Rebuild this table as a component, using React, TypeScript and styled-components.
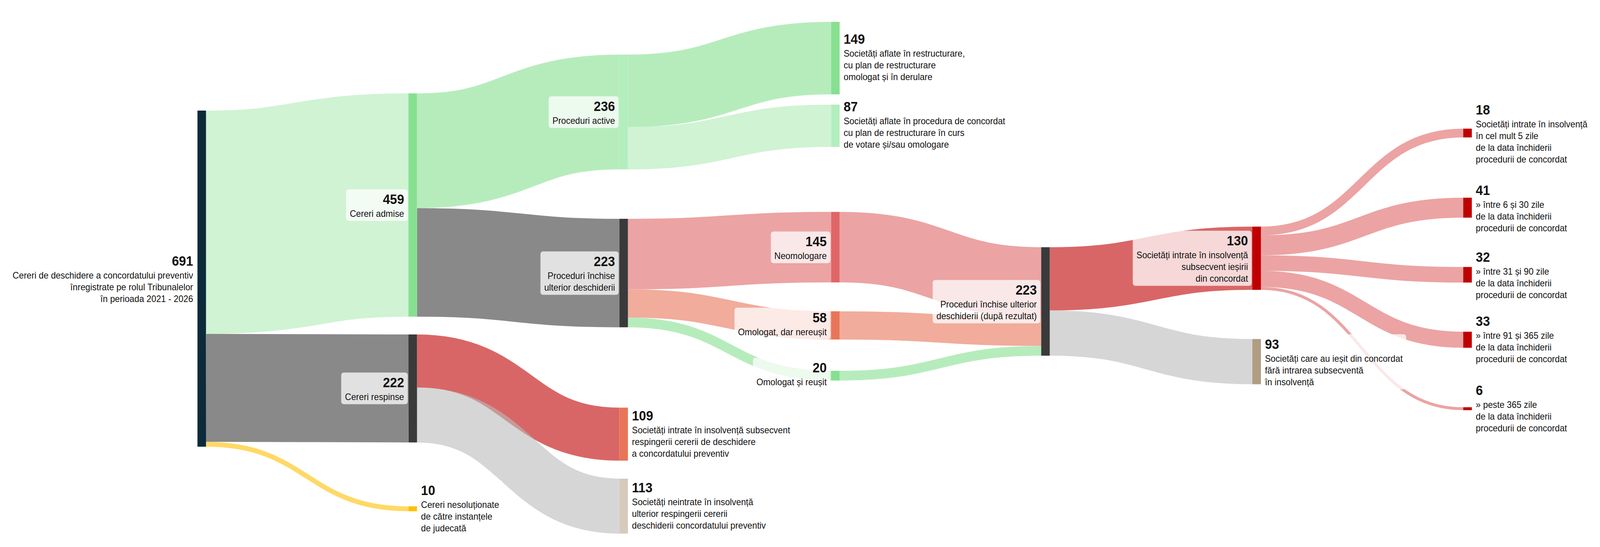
import React, { useEffect, useState } from 'react';
import styled, { createGlobalStyle } from 'styled-components';

const GlobalStyle = createGlobalStyle`
  html, body {
    margin: 0;
    padding: 0;
    background: #ffffff;
  }
  body {
    font-family: "Liberation Sans", Arial, Helvetica, sans-serif;
    color: #111111;
  }
`;

/* Design space of the chart: 4400 x 1400 */
const DESIGN_W = 4400;
const DESIGN_H = 1400;
const K = 1.245;
const NW = 23.5;
const COLS = [543, 1123.3, 1703.3, 2285.5, 2863.3, 3444, 4024];

type Side = 'left' | 'right';

interface NodeDef {
  id: string;
  col: number;
  top: number;
  value: number;
  color: string;
  side: Side;
  lines: string[];
  dy?: number;
}

interface LinkDef {
  s: string;
  t: string;
  value: number;
  color: string;
  opacity: number;
}

const DAYS = ['de la data închiderii', 'procedurii de concordat'];

const NODES: NodeDef[] = [
  {
    id: 'n0', col: 0, top: 283, value: 691, color: '#0b2a3a', side: 'left',
    lines: ['Cereri de deschidere a concordatului preventiv', 'înregistrate pe rolul Tribunalelor', 'în perioada 2021 - 2026'],
  },
  { id: 'n1', col: 1, top: 239, value: 459, color: '#86e090', side: 'left', lines: ['Cereri admise'] },
  { id: 'n2', col: 1, top: 856, value: 222, color: '#3a3a3a', side: 'left', lines: ['Cereri respinse'] },
  {
    id: 'n3', col: 1, top: 1296, value: 10, color: '#ffc000', side: 'right', dy: -2,
    lines: ['Cereri nesoluționate', 'de către instanțele', 'de judecată'],
  },
  { id: 'n4', col: 2, top: 139.7, value: 236, color: '#b3eebe', side: 'left', lines: ['Proceduri active'] },
  { id: 'n5', col: 2, top: 560, value: 223, color: '#3a3a3a', side: 'left', lines: ['Proceduri închise', 'ulterior deschiderii'] },
  {
    id: 'n6', col: 2, top: 1043.3, value: 109, color: '#e87558', side: 'right', dy: -2,
    lines: ['Societăți intrate în insolvență subsecvent', 'respingerii cererii de deschidere', 'a concordatului preventiv'],
  },
  {
    id: 'n7', col: 2, top: 1225, value: 113, color: '#d6cabd', side: 'right', dy: -2,
    lines: ['Societăți neintrate în insolvență', 'ulterior respingerii cererii', 'deschiderii concordatului preventiv'],
  },
  {
    id: 'n8', col: 3, top: 56, value: 149, color: '#86e090', side: 'right', dy: -4,
    lines: ['Societăți aflate în restructurare,', 'cu plan de restructurare', 'omologat și în derulare'],
  },
  {
    id: 'n9', col: 3, top: 267.7, value: 87, color: '#b3eebe', side: 'right', dy: -4,
    lines: ['Societăți aflate în procedura de concordat', 'cu plan de restructurare în curs', 'de votare și/sau omologare'],
  },
  { id: 'n10', col: 3, top: 542.3, value: 145, color: '#e06666', side: 'left', lines: ['Neomologare'] },
  { id: 'n11', col: 3, top: 796.7, value: 58, color: '#e87558', side: 'left', lines: ['Omologat, dar nereușit'], dy: -5 },
  { id: 'n12', col: 3, top: 949, value: 20, color: '#86e090', side: 'left', lines: ['Omologat și reușit'], dy: -5 },
  {
    id: 'n13', col: 4, top: 632.7, value: 223, color: '#3a3a3a', side: 'left',
    lines: ['Proceduri închise ulterior', 'deschiderii (după rezultat)'],
  },
  {
    id: 'n14', col: 5, top: 580, value: 130, color: '#c00000', side: 'left',
    lines: ['Societăți intrate în insolvență', 'subsecvent ieșirii', 'din concordat'],
  },
  {
    id: 'n15', col: 5, top: 867.7, value: 93, color: '#b09d82', side: 'right',
    lines: ['Societăți care au ieșit din concordat', 'fără intrarea subsecventă', 'în insolvență'],
  },
  {
    id: 'n16', col: 6, top: 329.3, value: 18, color: '#c00000', side: 'right',
    lines: ['Societăți intrate în insolvență', 'în cel mult 5 zile', ...DAYS],
  },
  { id: 'n17', col: 6, top: 506, value: 41, color: '#c00000', side: 'right', lines: ['» între 6 și 30 zile', ...DAYS] },
  { id: 'n18', col: 6, top: 683.3, value: 32, color: '#c00000', side: 'right', lines: ['» între 31 și 90 zile', ...DAYS] },
  { id: 'n19', col: 6, top: 849, value: 33, color: '#c00000', side: 'right', lines: ['» între 91 și 365 zile', ...DAYS], dy: -3 },
  { id: 'n20', col: 6, top: 1042.3, value: 6, color: '#c00000', side: 'right', lines: ['» peste 365 zile', ...DAYS], dy: -2 },
];

const GREEN = '#86e090';
const DARK = '#3a3a3a';
const RED = '#c00000';
const PINK = '#e06666';
const SALMON = '#e87558';
const LGREY = '#bbbbbb';

const LINKS: LinkDef[] = [
  { s: 'n0', t: 'n1', value: 459, color: GREEN, opacity: 0.4 },
  { s: 'n0', t: 'n2', value: 222, color: DARK, opacity: 0.6 },
  { s: 'n0', t: 'n3', value: 10, color: '#ffc000', opacity: 0.6 },
  { s: 'n1', t: 'n4', value: 236, color: GREEN, opacity: 0.6 },
  { s: 'n1', t: 'n5', value: 223, color: DARK, opacity: 0.6 },
  { s: 'n2', t: 'n6', value: 109, color: RED, opacity: 0.6 },
  { s: 'n2', t: 'n7', value: 113, color: LGREY, opacity: 0.6 },
  { s: 'n4', t: 'n8', value: 149, color: GREEN, opacity: 0.6 },
  { s: 'n4', t: 'n9', value: 87, color: GREEN, opacity: 0.4 },
  { s: 'n5', t: 'n10', value: 145, color: PINK, opacity: 0.6 },
  { s: 'n5', t: 'n11', value: 58, color: SALMON, opacity: 0.6 },
  { s: 'n5', t: 'n12', value: 20, color: GREEN, opacity: 0.6 },
  { s: 'n10', t: 'n13', value: 145, color: PINK, opacity: 0.6 },
  { s: 'n11', t: 'n13', value: 58, color: SALMON, opacity: 0.6 },
  { s: 'n12', t: 'n13', value: 20, color: GREEN, opacity: 0.6 },
  { s: 'n13', t: 'n14', value: 130, color: RED, opacity: 0.6 },
  { s: 'n13', t: 'n15', value: 93, color: LGREY, opacity: 0.6 },
  { s: 'n14', t: 'n16', value: 18, color: PINK, opacity: 0.6 },
  { s: 'n14', t: 'n17', value: 41, color: PINK, opacity: 0.6 },
  { s: 'n14', t: 'n18', value: 32, color: PINK, opacity: 0.6 },
  { s: 'n14', t: 'n19', value: 33, color: PINK, opacity: 0.6 },
  { s: 'n14', t: 'n20', value: 6, color: PINK, opacity: 0.6 },
];

interface LinkGeom extends LinkDef {
  d: string;
  width: number;
}

const buildLinks = (): LinkGeom[] => {
  const byId = new Map(NODES.map((n) => [n.id, n]));
  const outOff = new Map<string, number>();
  const inOff = new Map<string, number>();
  return LINKS.map((l) => {
    const s = byId.get(l.s)!;
    const t = byId.get(l.t)!;
    const w = l.value * K;
    const so = outOff.get(s.id) ?? 0;
    const to = inOff.get(t.id) ?? 0;
    outOff.set(s.id, so + w);
    inOff.set(t.id, to + w);
    const x0 = COLS[s.col] + NW;
    const x1 = COLS[t.col];
    const y0 = s.top + so + w / 2;
    const y1 = t.top + to + w / 2;
    const xm = (x0 + x1) / 2;
    return {
      ...l,
      width: w,
      d: `M${x0},${y0}C${xm},${y0} ${xm},${y1} ${x1},${y1}`,
    };
  });
};

/* The browser window is narrower than the 4400px design, so the chart is
   fitted to the available width (computed at run time). */
const useFitScale = () => {
  const get = () => (typeof window === 'undefined' ? 1 : Math.min(1, window.innerWidth / DESIGN_W));
  const [scale, setScale] = useState(get);
  useEffect(() => {
    const onResize = () => setScale(get());
    window.addEventListener('resize', onResize);
    return () => window.removeEventListener('resize', onResize);
  }, []);
  return scale;
};

const Viewport = styled.div`
  width: 100%;
  height: ${DESIGN_H}px;
  overflow: hidden;
  background: #ffffff;
`;

const Stage = styled.div`
  position: relative;
  width: ${DESIGN_W}px;
  height: ${DESIGN_H}px;
  transform-origin: 0 0;
`;

const Chart = styled.svg`
  display: block;
  width: ${DESIGN_W}px;
  height: ${DESIGN_H}px;
`;

const LabelLayer = styled.div`
  position: absolute;
  inset: 0;
  pointer-events: none;
`;

const LabelBox = styled.div<{ $side: Side }>`
  position: absolute;
  display: flex;
  flex-direction: column;
  align-items: ${(p) => (p.$side === 'left' ? 'flex-end' : 'flex-start')};
  text-align: ${(p) => (p.$side === 'left' ? 'right' : 'left')};
  padding: 5px 10px 4px;
  border-radius: 7px;
  background: rgba(255, 255, 255, 0.75);
  transform: translate(${(p) => (p.$side === 'left' ? '-100%' : '0')}, -50%);
  white-space: nowrap;
  color: #111111;
`;

const Value = styled.div`
  font-size: 35px;
  font-weight: 700;
  line-height: 40px;
`;

const Lines = styled.div`
  display: flex;
  flex-direction: column;
  align-items: inherit;
  margin-top: 2px;
`;

const Line = styled.div`
  font-size: 24px;
  line-height: 30px;
`;

const Label: React.FC<{ node: NodeDef }> = ({ node }) => {
  const x = node.side === 'left' ? COLS[node.col] - 2 : COLS[node.col] + NW + 1;
  const y = node.top + (node.value * K) / 2 + (node.dy ?? 0);
  return (
    <LabelBox $side={node.side} style={{ left: x, top: y }}>
      <Value>{node.value}</Value>
      <Lines>
        {node.lines.map((l, i) => (
          <Line key={i}>{l}</Line>
        ))}
      </Lines>
    </LabelBox>
  );
};

export default function App() {
  const links = buildLinks();
  const scale = useFitScale();
  return (
    <>
      <GlobalStyle />
      <Viewport>
        <Stage style={{ transform: `scaleX(${scale})` }}>
          <Chart viewBox={`0 0 ${DESIGN_W} ${DESIGN_H}`} xmlns="http://www.w3.org/2000/svg">
            <g fill="none">
              {links.map((l, i) => (
                <path
                  key={i}
                  d={l.d}
                  stroke={l.color}
                  strokeOpacity={l.opacity}
                  strokeWidth={l.width}
                />
              ))}
            </g>
            <g>
              {NODES.map((n) => (
                <rect
                  key={n.id}
                  x={COLS[n.col]}
                  y={n.top}
                  width={NW}
                  height={n.value * K}
                  fill={n.color}
                />
              ))}
            </g>
          </Chart>
          <LabelLayer>
            {NODES.map((n) => (
              <Label key={n.id} node={n} />
            ))}
          </LabelLayer>
        </Stage>
      </Viewport>
    </>
  );
}
